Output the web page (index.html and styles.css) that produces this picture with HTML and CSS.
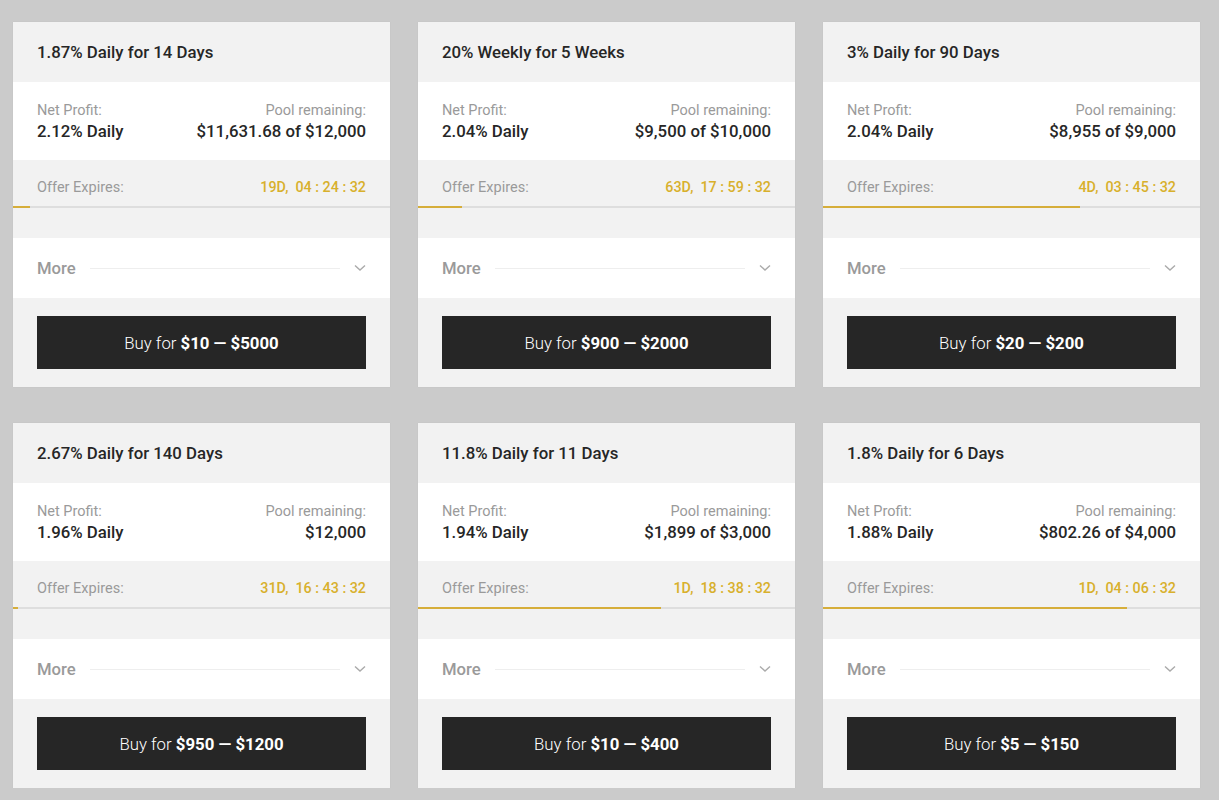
FILE: index.html
```html
<!DOCTYPE html>
<html lang="en">
<head>
    <meta charset="UTF-8">
    <meta name="viewport" content="width=device-width, initial-scale=1.0">
    <title>Investment Offers</title>
    <link rel="stylesheet" href="styles.css">
</head>
<body>
    <div class="offers">
        <div class="offer">
            <div class="offer-title">1.87% Daily for 14 Days</div>
            <div class="offer-stats">
                <div class="stat"><span class="stat-label">Net Profit:</span><span class="stat-value">2.12% Daily</span></div>
                <div class="stat right"><span class="stat-label">Pool remaining:</span><span class="stat-value">$11,631.68 of $12,000</span></div>
            </div>
            <div class="offer-expires">
                <div class="expires-row"><span>Offer Expires:</span><span class="timer">19D,&nbsp; 04 : 24 : 32</span></div>
                <div class="progress"><div class="progress-fill" style="width: 4.5%"></div></div>
            </div>
            <div class="offer-more">
                <span>More</span>
                <div class="more-line"></div>
                <svg class="chevron" width="12" height="8" viewBox="0 0 12 8"><path d="M1 1.5 L6 6 L11 1.5" fill="none" stroke="#aaa" stroke-width="1.4"/></svg>
            </div>
            <div class="offer-buy"><button class="buy-btn">Buy for <b>$10 — $5000</b></button></div>
        </div>

        <div class="offer">
            <div class="offer-title">20% Weekly for 5 Weeks</div>
            <div class="offer-stats">
                <div class="stat"><span class="stat-label">Net Profit:</span><span class="stat-value">2.04% Daily</span></div>
                <div class="stat right"><span class="stat-label">Pool remaining:</span><span class="stat-value">$9,500 of $10,000</span></div>
            </div>
            <div class="offer-expires">
                <div class="expires-row"><span>Offer Expires:</span><span class="timer">63D,&nbsp; 17 : 59 : 32</span></div>
                <div class="progress"><div class="progress-fill" style="width: 11.7%"></div></div>
            </div>
            <div class="offer-more">
                <span>More</span>
                <div class="more-line"></div>
                <svg class="chevron" width="12" height="8" viewBox="0 0 12 8"><path d="M1 1.5 L6 6 L11 1.5" fill="none" stroke="#aaa" stroke-width="1.4"/></svg>
            </div>
            <div class="offer-buy"><button class="buy-btn">Buy for <b>$900 — $2000</b></button></div>
        </div>

        <div class="offer">
            <div class="offer-title">3% Daily for 90 Days</div>
            <div class="offer-stats">
                <div class="stat"><span class="stat-label">Net Profit:</span><span class="stat-value">2.04% Daily</span></div>
                <div class="stat right"><span class="stat-label">Pool remaining:</span><span class="stat-value">$8,955 of $9,000</span></div>
            </div>
            <div class="offer-expires">
                <div class="expires-row"><span>Offer Expires:</span><span class="timer">4D,&nbsp; 03 : 45 : 32</span></div>
                <div class="progress"><div class="progress-fill" style="width: 68.3%"></div></div>
            </div>
            <div class="offer-more">
                <span>More</span>
                <div class="more-line"></div>
                <svg class="chevron" width="12" height="8" viewBox="0 0 12 8"><path d="M1 1.5 L6 6 L11 1.5" fill="none" stroke="#aaa" stroke-width="1.4"/></svg>
            </div>
            <div class="offer-buy"><button class="buy-btn">Buy for <b>$20 — $200</b></button></div>
        </div>

        <div class="offer">
            <div class="offer-title">2.67% Daily for 140 Days</div>
            <div class="offer-stats">
                <div class="stat"><span class="stat-label">Net Profit:</span><span class="stat-value">1.96% Daily</span></div>
                <div class="stat right"><span class="stat-label">Pool remaining:</span><span class="stat-value">$12,000</span></div>
            </div>
            <div class="offer-expires">
                <div class="expires-row"><span>Offer Expires:</span><span class="timer">31D,&nbsp; 16 : 43 : 32</span></div>
                <div class="progress"><div class="progress-fill" style="width: 1.2%"></div></div>
            </div>
            <div class="offer-more">
                <span>More</span>
                <div class="more-line"></div>
                <svg class="chevron" width="12" height="8" viewBox="0 0 12 8"><path d="M1 1.5 L6 6 L11 1.5" fill="none" stroke="#aaa" stroke-width="1.4"/></svg>
            </div>
            <div class="offer-buy"><button class="buy-btn">Buy for <b>$950 — $1200</b></button></div>
        </div>

        <div class="offer">
            <div class="offer-title">11.8% Daily for 11 Days</div>
            <div class="offer-stats">
                <div class="stat"><span class="stat-label">Net Profit:</span><span class="stat-value">1.94% Daily</span></div>
                <div class="stat right"><span class="stat-label">Pool remaining:</span><span class="stat-value">$1,899 of $3,000</span></div>
            </div>
            <div class="offer-expires">
                <div class="expires-row"><span>Offer Expires:</span><span class="timer">1D,&nbsp; 18 : 38 : 32</span></div>
                <div class="progress"><div class="progress-fill" style="width: 64.5%"></div></div>
            </div>
            <div class="offer-more">
                <span>More</span>
                <div class="more-line"></div>
                <svg class="chevron" width="12" height="8" viewBox="0 0 12 8"><path d="M1 1.5 L6 6 L11 1.5" fill="none" stroke="#aaa" stroke-width="1.4"/></svg>
            </div>
            <div class="offer-buy"><button class="buy-btn">Buy for <b>$10 — $400</b></button></div>
        </div>

        <div class="offer">
            <div class="offer-title">1.8% Daily for 6 Days</div>
            <div class="offer-stats">
                <div class="stat"><span class="stat-label">Net Profit:</span><span class="stat-value">1.88% Daily</span></div>
                <div class="stat right"><span class="stat-label">Pool remaining:</span><span class="stat-value">$802.26 of $4,000</span></div>
            </div>
            <div class="offer-expires">
                <div class="expires-row"><span>Offer Expires:</span><span class="timer">1D,&nbsp; 04 : 06 : 32</span></div>
                <div class="progress"><div class="progress-fill" style="width: 80.6%"></div></div>
            </div>
            <div class="offer-more">
                <span>More</span>
                <div class="more-line"></div>
                <svg class="chevron" width="12" height="8" viewBox="0 0 12 8"><path d="M1 1.5 L6 6 L11 1.5" fill="none" stroke="#aaa" stroke-width="1.4"/></svg>
            </div>
            <div class="offer-buy"><button class="buy-btn">Buy for <b>$5 — $150</b></button></div>
        </div>
    </div>
</body>
</html>
```

FILE: styles.css
```css
* { box-sizing: border-box; margin: 0; padding: 0; }
body { background: #cbcbcb; font-family: Roboto, 'Liberation Sans', sans-serif; color: #222; }

.offers { display: grid; grid-template-columns: repeat(3, 377px); column-gap: 28px; row-gap: 36px; padding: 22px 0 0 13px; }

.offer { background: #f2f2f2; height: 365px; display: flex; flex-direction: column; box-shadow: 0 0 1px rgba(0, 0, 0, 0.08); }

.offer-title { height: 60px; display: flex; align-items: center; padding: 0 24px; font-size: 16.8px; font-weight: 500; color: #262626; }

.offer-stats { background: #fff; height: 78px; display: flex; justify-content: space-between; padding: 19px 24px 16px; }
.stat { display: flex; flex-direction: column; }
.stat.right { align-items: flex-end; }
.stat-label { font-size: 14.5px; line-height: 19px; color: #9a9a9a; }
.stat-value { font-size: 16.8px; line-height: 23px; font-weight: 500; color: #262626; }

.offer-expires { height: 78px; }
.expires-row { display: flex; justify-content: space-between; padding: 18px 24px 9px; font-size: 14.5px; line-height: 19px; color: #9a9a9a; }
.timer { color: #d8b02c; font-weight: 500; font-size: 14.3px; }
.progress { height: 2px; background: #dedede; }
.progress-fill { height: 100%; background: #d6ae3a; }

.offer-more { background: #fff; height: 60px; display: flex; align-items: center; padding: 0 24px; font-size: 16.7px; font-weight: 500; color: #9a9a9a; }
.more-line { flex: 1; height: 1px; background: #eeeeee; margin: 0 14px 0 14px; }
.chevron { display: block; }

.offer-buy { flex: 1; padding: 18px 24px 0; }
.buy-btn { width: 100%; height: 53px; background: #262626; border: none; color: #fff; font-family: inherit; font-size: 16.8px; font-weight: 300; }
.buy-btn b { font-weight: 700; }
```
